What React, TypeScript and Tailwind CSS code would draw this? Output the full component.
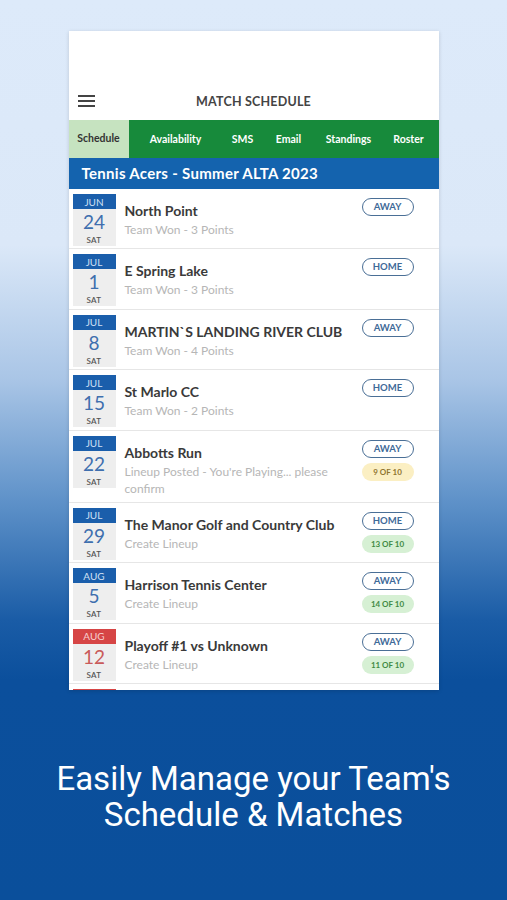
import React from "react";

type Row = {
  mon: string;
  day: string;
  title: string;
  sub: string;
  loc: "AWAY" | "HOME";
  count?: string;
  countTone?: "yellow" | "green";
  red?: boolean;
};

const rows: Row[] = [
  { mon: "JUN", day: "24", title: "North Point", sub: "Team Won - 3 Points", loc: "AWAY" },
  { mon: "JUL", day: "1", title: "E Spring Lake", sub: "Team Won - 3 Points", loc: "HOME" },
  { mon: "JUL", day: "8", title: "MARTIN`S LANDING RIVER CLUB", sub: "Team Won - 4 Points", loc: "AWAY" },
  { mon: "JUL", day: "15", title: "St Marlo CC", sub: "Team Won - 2 Points", loc: "HOME" },
  { mon: "JUL", day: "22", title: "Abbotts Run", sub: "Lineup Posted - You're Playing... please confirm", loc: "AWAY", count: "9 OF 10", countTone: "yellow" },
  { mon: "JUL", day: "29", title: "The Manor Golf and Country Club", sub: "Create Lineup", loc: "HOME", count: "13 OF 10", countTone: "green" },
  { mon: "AUG", day: "5", title: "Harrison Tennis Center", sub: "Create Lineup", loc: "AWAY", count: "14 OF 10", countTone: "green" },
  { mon: "AUG", day: "12", title: "Playoff #1 vs Unknown", sub: "Create Lineup", loc: "AWAY", count: "11 OF 10", countTone: "green", red: true },
];

function DateBox({ r }: { r: Row }) {
  return (
    <div className="w-[43px] shrink-0 flex flex-col">
      <div
        className={
          "h-[15px] flex items-center justify-center text-[10px] leading-none " +
          (r.red ? "bg-[#d64545] text-[#f6d0d0]" : "bg-[#1a5eab] text-[#cfe0f5]")
        }
      >
        {r.mon}
      </div>
      <div className="h-[37px] bg-[#eeeeee] flex flex-col items-center pt-[3px]">
        <div className={"text-[19px] leading-[19px] " + (r.red ? "text-[#c95a5a]" : "text-[#3f6fae]")}>{r.day}</div>
        <div className="text-[8px] leading-none mt-[5px] text-[#555] font-semibold tracking-[0.3px]">SAT</div>
      </div>
    </div>
  );
}

function MatchRow({ r, first }: { r: Row; first?: boolean }) {
  const tall = r.sub.length > 40;
  return (
    <div
      className={
        "flex border-b border-[#e6e6e6] pl-[4px] pr-[25px] " +
        (tall ? "h-[72px]" : first ? "h-[60px]" : "h-[60.5px]")
      }
    >
      <div className="pt-[5px]">
        <DateBox r={r} />
      </div>
      <div className="flex-1 min-w-0 pl-[9px] pt-[13px] pr-[4px]">
        <div className="text-[14px] leading-[17px] font-bold text-[#3a3a3a] whitespace-nowrap">{r.title}</div>
        <div className="text-[12px] leading-[17px] mt-[2px] text-[#b6b6b6] pr-[4px]">{r.sub}</div>
      </div>
      <div className="w-[52px] shrink-0 flex flex-col items-center pt-[9px] gap-[5px]">
        <div className="w-[52px] h-[18px] rounded-full border border-[#4a6f96] flex items-center justify-center text-[9.5px] font-bold text-[#3f6a98] leading-none">
          {r.loc}
        </div>
        {r.count && (
          <div
            className={
              "w-[52px] h-[18px] rounded-full flex items-center justify-center text-[8px] font-bold leading-none " +
              (r.countTone === "yellow" ? "bg-[#fbefc3] text-[#8f7530]" : "bg-[#d6f0d4] text-[#3f8a45]")
            }
          >
            {r.count}
          </div>
        )}
      </div>
    </div>
  );
}

export default function App() {
  return (
    <div
      className="w-full min-h-[900px] flex flex-col items-center bg-[linear-gradient(180deg,#ddeafa_0px,#dbe8f8_245px,#a9c5e6_380px,#5f92c9_500px,#1a5ca6_620px,#0b4f9c_680px,#0a4f9b_900px)]"
      style={{ fontFamily: "Lato, 'Open Sans', sans-serif" }}
    >
      <div className="mt-[31px] w-[370px] h-[659px] bg-white overflow-hidden shadow-[0_1px_4px_rgba(0,0,0,0.15)] flex flex-col">
        <div className="h-[54px] shrink-0" />
        <div className="h-[35px] shrink-0 relative flex items-center justify-center">
          <div className="absolute left-[9px] top-[10px] flex flex-col gap-[3px]">
            <div className="w-[17px] h-[2px] bg-[#444]" />
            <div className="w-[17px] h-[2px] bg-[#444]" />
            <div className="w-[17px] h-[2px] bg-[#444]" />
          </div>
          <div className="text-[12.5px] font-bold text-[#444] tracking-[0.2px]">MATCH SCHEDULE</div>
        </div>
        <div className="h-[38px] shrink-0 flex bg-[#178a3b] text-[10.5px] font-bold pt-[1px]">
          <div className="w-[60px] bg-[#c6e3c0] flex items-center justify-center text-[#333] -mt-[1px]">Schedule</div>
          <div className="w-[94px] flex items-center justify-center text-white">Availability</div>
          <div className="w-[40px] flex items-center justify-center text-white">SMS</div>
          <div className="w-[52px] flex items-center justify-center text-white">Email</div>
          <div className="w-[68px] flex items-center justify-center text-white">Standings</div>
          <div className="w-[52px] flex items-center justify-center text-white">Roster</div>
        </div>
        <div className="h-[31px] shrink-0 bg-[#1463ae] flex items-center pl-[13px] text-[15px] font-bold text-white tracking-[0.3px]">
          Tennis Acers - Summer ALTA 2023
        </div>
        <div className="flex flex-col">
          {rows.map((r, i) => (
            <MatchRow key={i} r={r} first={i === 0} />
          ))}
          <div className="pl-[4px] pt-[5px]">
            <div className="w-[43px] h-[15px] bg-[#d64545]" />
          </div>
        </div>
      </div>
      <div
        className="mt-[71px] text-center text-white text-[33px] leading-[36px]"
        style={{ fontFamily: "Roboto, sans-serif" }}
      >
        <div>Easily Manage your Team's</div>
        <div>Schedule &amp; Matches</div>
      </div>
    </div>
  );
}
